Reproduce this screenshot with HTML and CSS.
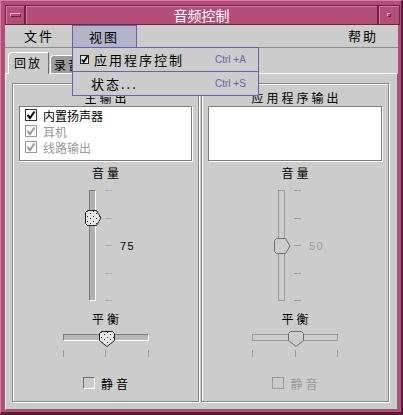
FILE: index.html
```html
<!DOCTYPE html>
<html lang="zh">
<head>
<meta charset="UTF-8">
<title>音频控制</title>
<link rel="stylesheet" href="styles.css">
</head>
<body>
<svg class="defs" width="0" height="0">
 <defs>
  <pattern id="dots" width="6" height="5" patternUnits="userSpaceOnUse">
   <rect x="2" y="1" width="1" height="1" fill="#333"/>
   <rect x="5" y="3" width="1" height="1" fill="#333"/>
  </pattern>
 </defs>
</svg>
<div class="window">
 <div class="titlebar">
  <div class="tbtn"><span class="min-glyph"></span></div>
  <div class="title">音频控制</div>
  <div class="tbtn max"><span class="max-glyph"></span></div>
 </div>
 <div class="client">
  <div class="menubar">
   <span class="menu">文件</span>
   <span class="menu open">视图</span>
   <span class="menu help">帮助</span>
  </div>
  <div class="tabs">
   <span class="tab active">回放</span>
   <span class="tab">录音</span>
  </div>
  <div class="panel">
   <!-- main output -->
   <div class="group">
    <div class="glabel first">主输出</div>
    <div class="list">
     <div class="item"><svg class="cb" width="12" height="12"><rect x="0.5" y="0.5" width="11" height="11" fill="#fff" stroke="#333"/><polyline points="2.5,6 5,9 9.5,2.5" fill="none" stroke="#000" stroke-width="2"/></svg>内置扬声器</div>
     <div class="item off"><svg class="cb" width="12" height="12"><rect x="0.5" y="0.5" width="11" height="11" fill="#fff" stroke="#9a9a9a"/><polyline points="2.5,6 5,9 9.5,2.5" fill="none" stroke="#9a9a9a" stroke-width="2"/></svg>耳机</div>
     <div class="item off"><svg class="cb" width="12" height="12"><rect x="0.5" y="0.5" width="11" height="11" fill="#fff" stroke="#9a9a9a"/><polyline points="2.5,6 5,9 9.5,2.5" fill="none" stroke="#9a9a9a" stroke-width="2"/></svg>线路输出</div>
    </div>
    <div class="glabel vol">音量</div>
    <div class="vslider">
     <div class="vtrack-wrap">
      <div class="vtrack"></div>
      <svg class="vthumb" width="17" height="16" style="top:20px"><path d="M2.5,0.5 H11.5 L16,8 L11.5,15.5 H2.5 L0.5,13.5 V2.5 Z" fill="#e6e6e6" stroke="#222"/><path d="M2.5,0.5 H11.5 L16,8 L11.5,15.5 H2.5 L0.5,13.5 V2.5 Z" fill="url(#dots)"/></svg>
     </div>
     <div class="vticks"><i></i><i></i><i></i><i></i><i></i></div>
     <div class="vvalue">75</div>
    </div>
    <div class="glabel bal">平衡</div>
    <div class="hslider">
     <div class="htrack"></div>
     <svg class="hthumb" width="16" height="16" style="left:36px"><path d="M0.5,2.5 L2.5,0.5 H13.5 L15.5,2.5 V9.5 L8,15.5 L0.5,9.5 Z" fill="#e6e6e6" stroke="#222"/><path d="M0.5,2.5 L2.5,0.5 H13.5 L15.5,2.5 V9.5 L8,15.5 L0.5,9.5 Z" fill="url(#dots)"/></svg>
     <div class="hticks"><i></i><i></i><i></i></div>
    </div>
    <div class="mute"><span class="box"></span>静音</div>
   </div>
   <!-- application output -->
   <div class="group off">
    <div class="glabel first">应用程序输出</div>
    <div class="list"></div>
    <div class="glabel vol">音量</div>
    <div class="vslider">
     <div class="vtrack-wrap">
      <div class="vtrack"></div>
      <svg class="vthumb" width="17" height="16" style="top:48px"><path d="M2.5,0.5 H11.5 L16,8 L11.5,15.5 H2.5 L0.5,13.5 V2.5 Z" fill="#cccccc" stroke="#6e6e6e"/></svg>
     </div>
     <div class="vticks"><i></i><i></i><i></i><i></i><i></i></div>
     <div class="vvalue">50</div>
    </div>
    <div class="glabel bal">平衡</div>
    <div class="hslider">
     <div class="htrack"></div>
     <svg class="hthumb" width="16" height="16" style="left:36px"><path d="M0.5,2.5 L2.5,0.5 H13.5 L15.5,2.5 V9.5 L8,15.5 L0.5,9.5 Z" fill="#cccccc" stroke="#6e6e6e"/></svg>
     <div class="hticks"><i></i><i></i><i></i></div>
    </div>
    <div class="mute"><span class="box"></span>静音</div>
   </div>
  </div>
  <!-- open view menu -->
  <div class="dropdown">
   <div class="mi">
    <span class="mi-label"><svg class="mcb" width="9" height="9"><rect x="0.5" y="0.5" width="8" height="8" fill="#e8e8e8" stroke="#222"/><polyline points="2,4.5 3.8,7 7.5,1" fill="none" stroke="#000" stroke-width="1.7"/></svg>应用程序控制</span>
    <span class="mi-key">Ctrl +A</span>
   </div>
   <div class="mi">
    <span class="mi-label plain">状态...</span>
    <span class="mi-key">Ctrl +S</span>
   </div>
  </div>
 </div>
</div>
</body>
</html>
```

FILE: styles.css
```css
* { box-sizing: border-box; }
body {
margin: 0;
font-family: "Noto Sans CJK SC", sans-serif;
font-size: 12px;
color: #000;
}
.defs { position: absolute; }

.window {
width: 403px;
height: 415px;
background: #b44e78;
border-top: 1px solid #d27ea2;
border-left: 1px solid #d27ea2;
border-right: 2px solid #5a1d39;
border-bottom: 3px solid #5a1d39;
display: flex;
flex-direction: column;
}

/* title bar */
.titlebar {
height: 24px;
flex-shrink: 0;
padding: 4px 1px 0 4px;
display: flex;
}
.tbtn {
width: 20px;
height: 20px;
border: 1px solid #6e2446;
box-shadow: inset 1px 1px 0 #cf7fa3;
display: flex;
align-items: center;
justify-content: center;
}
.tbtn.max { width: 22px; }
.min-glyph {
width: 11px;
height: 4px;
border: 1px solid #eab3cb;
border-right-color: #6e2446;
border-bottom-color: #6e2446;
}
.max-glyph {
width: 4px;
height: 4px;
border: 1px solid #eab3cb;
border-right-color: #6e2446;
border-bottom-color: #6e2446;
}
.title {
flex: 1;
height: 20px;
border: 1px solid #6e2446;
box-shadow: inset 1px 1px 0 #cf7fa3;
color: #fff;
font-size: 14px;
line-height: 18px;
text-align: center;
}

.client {
position: relative;
flex: 1;
margin: 0 3px 2px 4px;
background: #cccccc;
display: flex;
flex-direction: column;
}

/* menu bar */
.menubar {
height: 23px;
flex-shrink: 0;
border-bottom: 1px solid #8c8c8c;
display: flex;
padding: 0 2px;
font-size: 13px;
letter-spacing: 2px;
}
.menu {
height: 22px;
line-height: 22px;
padding: 0 18px 0 17px;
}
.menu.open {
background: #b2b4c9;
border: 1px solid #6e5fae;
border-bottom: 0;
line-height: 21px;
padding: 0 17px 0 16px;
}
.menu.help { margin-left: auto; }

/* tabs */
.tabs {
height: 25px;
flex-shrink: 0;
display: flex;
align-items: flex-end;
gap: 1px;
padding-left: 3px;
}
.tab {
height: 18px;
padding: 0 6px 0 3px;
border: 1px solid #fff;
border-right-color: #6e6e6e;
border-bottom: 0;
border-top-left-radius: 4px;
background: #9c9c9c;
letter-spacing: 2px;
line-height: 17px;
}
.tab.active {
position: relative;
z-index: 1;
height: 22px;
margin-bottom: -1px;
padding-left: 5px;
background: #cccccc;
line-height: 19px;
}

.panel {
flex: 1;
border: 1px solid;
border-color: #fff #6e6e6e #6e6e6e #fff;
padding: 9px 8px 7px 6px;
display: flex;
gap: 2px;
}
.group {
width: 187px;
border: 1px solid #8a8a8a;
box-shadow: inset 1px 1px 0 #fff, 1px 1px 0 #fff;
padding: 0 6px;
display: flex;
flex-direction: column;
}
.group + .group { width: 188px; }

.glabel {
height: 14px;
line-height: 14px;
text-align: center;
letter-spacing: 3px;
padding-left: 3px;
}
.glabel.first { margin-top: 7px; }
.glabel.vol { margin-top: 5px; }
.glabel.bal { margin-top: 11px; }

.list {
height: 55px;
margin-top: 1px;
background: #fff;
border: 1px solid #7c7c7c;
box-shadow: 1px 1px 0 #fff;
}
.item {
height: 16px;
display: flex;
align-items: center;
padding-left: 5px;
}
.item .cb { margin-right: 6px; }
.item.off { color: #9a9a9a; }

/* volume */
.vslider {
display: flex;
height: 111px;
margin: 10px 0 0 66px;
}
.vtrack-wrap {
position: relative;
width: 16px;
}
.vtrack {
width: 7px;
height: 111px;
margin-left: 4px;
border: 1px solid #7a7a7a;
border-right-color: #fff;
border-bottom-color: #fff;
background: #b0b0b0;
}
.vthumb {
position: absolute;
left: 0;
}
.vticks {
width: 7px;
margin-left: 4px;
display: flex;
flex-direction: column;
justify-content: space-between;
}
.vticks i {
height: 1px;
background: #a9abc2;
}
.vvalue {
align-self: center;
margin-left: 8px;
font-family: "Liberation Sans", sans-serif;
font-size: 11px;
letter-spacing: 1.5px;
}

/* balance */
.hslider {
position: relative;
width: 86px;
height: 26px;
margin: 5px auto 0;
}
.htrack {
height: 7px;
margin-top: 3px;
border: 1px solid #7a7a7a;
border-right-color: #fff;
border-bottom-color: #fff;
background: #b8b8b8;
}
.hthumb {
position: absolute;
top: 0;
}
.hticks {
height: 7px;
margin-top: 9px;
display: flex;
justify-content: space-between;
}
.hticks i {
width: 1px;
background: #9a9a9a;
}

.mute {
height: 14px;
margin-top: 19px;
display: flex;
align-items: center;
justify-content: center;
gap: 6px;
letter-spacing: 3px;
padding-left: 3px;
}
.mute .box {
width: 12px;
height: 12px;
border: 1px solid #6e6e6e;
border-right-color: #fff;
border-bottom-color: #fff;
}

/* disabled application group */
.group.off .vtrack,
.group.off .htrack {
border-color: #9a9a9a;
background: #cccccc;
}
.group.off .vticks i { background: #9a9a9a; }
.group.off .vvalue,
.group.off .mute { color: #9a9a9a; }
.group.off .mute .box { border-color: #9a9a9a; }

/* dropdown */
.dropdown {
position: absolute;
z-index: 2;
left: 67px;
top: 22px;
width: 187px;
background: #cccccc;
border: 1px solid #6e5fae;
}
.mi {
height: 23px;
display: flex;
align-items: center;
}
.mi + .mi {
height: 24px;
border-top: 1px solid #6e5fae;
}
.mi-label {
width: 142px;
padding-left: 7px;
display: flex;
align-items: center;
font-size: 13px;
letter-spacing: 2px;
}
.mi-label.plain { padding-left: 18px; }
.mcb { margin-right: 5px; }
.mi-key {
font-family: "Liberation Sans", sans-serif;
font-size: 10px;
color: #6e5fae;
}
```
